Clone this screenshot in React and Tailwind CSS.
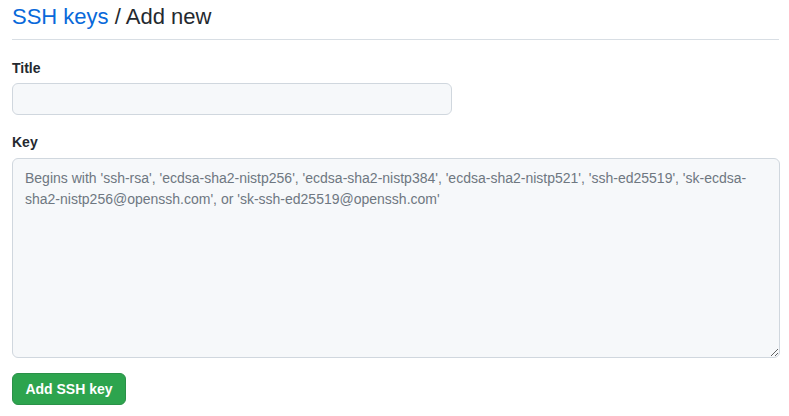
export default function App() {
  return (
    <div
      className="w-[789px] h-[416px] bg-white pl-3 pr-[10px] text-[#24292f]"
      style={{ fontFamily: '"Liberation Sans", Arial, sans-serif' }}
    >
      {/* Header */}
      <div className="pt-[2px] pb-[7px] border-b border-[#d8dee4]">
        <h2 className="text-[22px] leading-[30px] font-normal">
          <a className="text-[#0969da]">SSH keys</a> / Add new
        </h2>
      </div>

      {/* Title field */}
      <div className="mt-[18px]">
        <label className="block text-[14px] font-semibold leading-[20px]">Title</label>
        <input
          type="text"
          className="mt-[5px] block w-[440px] h-[32px] rounded-[6px] border border-[#d0d7de] bg-[#f6f8fa] px-3 text-[14px] outline-none"
        />
      </div>

      {/* Key field */}
      <div className="mt-[17px]">
        <label className="block text-[14px] font-semibold leading-[20px]">Key</label>
        <textarea
          className="mt-[6px] block w-[768px] h-[200px] rounded-[6px] border border-[#d0d7de] bg-[#f6f8fa] px-3 py-[9px] text-[14px] leading-[21px] placeholder-[#6e7781] outline-none"
          style={{ fontFamily: '"Liberation Sans", Arial, sans-serif' }}
          placeholder="Begins with 'ssh-rsa', 'ecdsa-sha2-nistp256', 'ecdsa-sha2-nistp384', 'ecdsa-sha2-nistp521', 'ssh-ed25519', 'sk-ecdsa-sha2-nistp256@openssh.com', or 'sk-ssh-ed25519@openssh.com'"
        />
      </div>

      {/* Submit */}
      <button className="mt-[15px] h-[32px] w-[114px] rounded-[6px] bg-[#2da44e] border border-[#2a9148] text-white text-[14px] font-semibold">
        Add SSH key
      </button>
    </div>
  );
}
